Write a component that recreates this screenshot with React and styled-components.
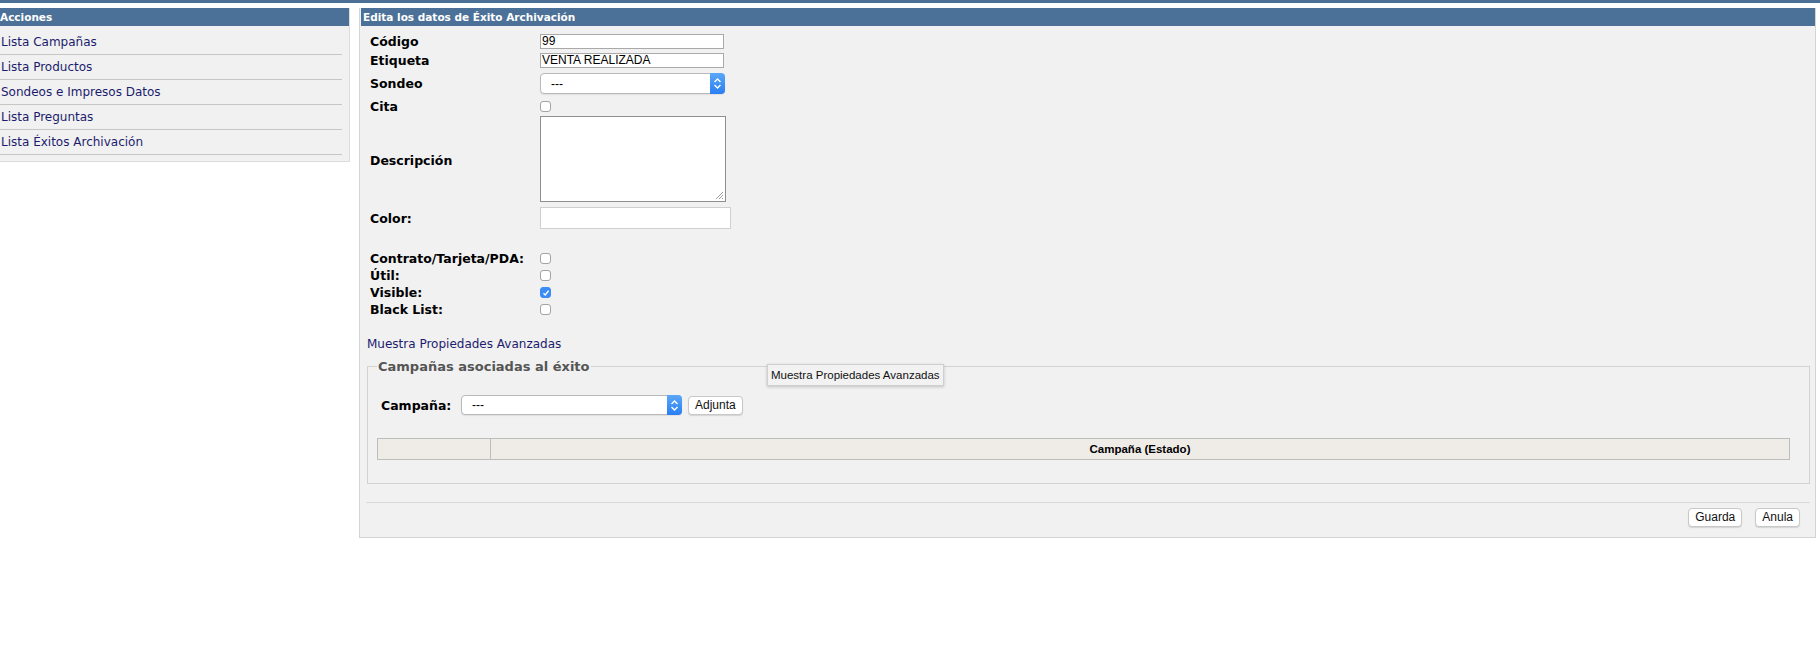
import React from "react";
import styled, { createGlobalStyle } from "styled-components";

const GlobalStyle = createGlobalStyle`
    body {
        margin: 0;
        background: #fff;
        font-family: "DejaVu Sans", Verdana, sans-serif;
    }
`;

const TopStrip = styled.div`
    height: 3px;
    background: #4b6f95;
`;

const Layout = styled.div`
    display: flex;
    align-items: flex-start;
    gap: 9px;
    padding-top: 5px;
    padding-right: 4px;
`;

const Sidebar = styled.aside`
    width: 350px;
    flex: none;
    background: #f1f1f1;
    border-right: 1px solid #dcdcdc;
    border-bottom: 1px solid #dcdcdc;
    box-sizing: border-box;
`;

const PanelHeader = styled.div`
    height: 18px;
    line-height: 18px;
    background: #4c7198;
    color: #fff;
    font-size: 10.5px;
    font-weight: bold;
    padding-left: ${(props) => props.indent || 0}px;
    white-space: nowrap;
`;

const NavList = styled.ul`
    list-style: none;
    margin: 0;
    padding: 4px 7px 6px 0;
`;

const NavItem = styled.li`
    height: 24px;
    line-height: 24px;
    border-bottom: 1px solid #c6c6c6;
    font-size: 12px;
    color: #1c1c6e;
    padding-left: 1px;
`;

const Main = styled.main`
    flex: 1;
    position: relative;
    background: #f1f1f1;
    border: 1px solid #d4d4d4;
    border-top: none;
    padding-left: 1px;
`;

const Form = styled.div`
    padding: 6px 0 0 9px;
`;

const FormRow = styled.div`
    display: grid;
    grid-template-columns: 170px 1fr;
    align-items: center;
    height: ${(props) => props.h}px;
`;

const Label = styled.span`
    font-size: 12.5px;
    font-weight: bold;
    color: #000;
`;

const TextInput = styled.div`
    width: ${(props) => props.w || 181}px;
    height: ${(props) => props.ht || 13}px;
    background: #fff;
    border: 1px solid ${(props) => props.light ? "#cfcfcf" : "#a9a9a9"};
    font-family: "Liberation Sans", Arial, sans-serif;
    font-size: 12px;
    line-height: 13px;
    padding-left: 1px;
    box-sizing: content-box;
`;

const TextArea = styled.div`
    position: relative;
    width: 184px;
    height: 84px;
    background: #fff;
    border: 1px solid #8f8f8f;
    align-self: start;
`;

const Grip = styled.svg`
    position: absolute;
    right: 1px;
    bottom: 1px;
`;

const SelectBox = styled.div`
    position: relative;
    width: ${(props) => props.w}px;
    height: ${(props) => props.ht}px;
    background: #fff;
    border: 1px solid #b9b9b9;
    border-radius: 4px;
    box-sizing: border-box;
    font-family: "Liberation Sans", Arial, sans-serif;
    font-size: 12px;
    display: flex;
    align-items: center;
    padding-left: 10px;
    box-shadow: 0 1px 1px rgba(0, 0, 0, 0.08);
`;

const SelectArrow = styled.div`
    position: absolute;
    right: -1px;
    top: -1px;
    bottom: -1px;
    width: 15px;
    border-radius: 0 4px 4px 0;
    background: linear-gradient(#5aa8f8, #2a7ef2);
    display: flex;
    align-items: center;
    justify-content: center;
`;

const Check = styled.span`
    display: inline-flex;
    align-items: center;
    justify-content: center;
    width: 11px;
    height: 11px;
    border-radius: 3px;
    box-sizing: border-box;
    border: 1px solid ${(props) => (props.checked ? "#3b8df5" : "#a3a3a3")};
    background: ${(props) => (props.checked ? "#3b8df5" : "#fff")};
    margin-top: ${(props) => props.mt || 0}px;
`;

const AdvLink = styled.div`
    margin: 18px 0 0 -3px;
    height: 16px;
    line-height: 16px;
    font-size: 12px;
    color: #1c1c6e;
`;

const Fieldset = styled.fieldset`
    margin: 7px 5px 0 6px;
    padding: 0 9px 23px 9px;
    border: 1px solid #d2d2d2;
`;

const Legend = styled.legend`
    padding: 0 1px;
    font-size: 13px;
    font-weight: bold;
    color: #555;
`;

const CampRow = styled.div`
    display: flex;
    align-items: center;
    margin: 21px 0 0 4px;
    height: 20px;
`;

const CampLabel = styled(Label)`
    width: 80px;
`;

const Button = styled.div`
    height: 19px;
    padding: 0 6px;
    box-sizing: border-box;
    background: #fff;
    border: 1px solid #c8c8c8;
    border-radius: 4px;
    box-shadow: 0 1px 1px rgba(0, 0, 0, 0.12);
    font-family: "Liberation Sans", Arial, sans-serif;
    font-size: 12px;
    line-height: 17px;
    color: #111;
    margin-left: ${(props) => props.ml || 0}px;
`;

const Table = styled.table`
    width: calc(100% - 10px);
    margin: 23px 0 0 0;
    border-collapse: collapse;
    background: #efece8;
`;

const Th = styled.th`
    height: 20px;
    border: 1px solid #bdbdbd;
    font-family: "Liberation Sans", Arial, sans-serif;
    font-size: 11.5px;
    font-weight: bold;
    padding: 0;
    width: ${(props) => props.width || "auto"};
`;

const Divider = styled.div`
    margin: 18px 5px 0 5px;
    border-top: 1px solid #d8d8d8;
`;

const Actions = styled.div`
    display: flex;
    justify-content: flex-end;
    padding: 5px 15px 10px 0;
`;

const Tooltip = styled.div`
    position: absolute;
    left: 407px;
    top: 356px;
    height: 20px;
    line-height: 20px;
    padding: 0 3px;
    background: #f2f2f2;
    border: 1px solid #cfcfcf;
    box-shadow: 0 1px 3px rgba(0, 0, 0, 0.2);
    font-family: "Liberation Sans", Arial, sans-serif;
    font-size: 11.5px;
    color: #111;
    white-space: nowrap;
`;

const Arrows = () => (
    <svg width="9" height="13" viewBox="0 0 9 13">
        <path d="M1.5 5 L4.5 2 L7.5 5 M1.5 8 L4.5 11 L7.5 8" fill="none" stroke="#fff" strokeWidth="1.4" />
    </svg>
);

const Select = ({ w, ht }) => (
    <SelectBox w={w} ht={ht}>
        ---
        <SelectArrow>
            <Arrows />
        </SelectArrow>
    </SelectBox>
);

const Checkbox = ({ checked, mt }) => (
    <Check checked={checked} mt={mt}>
        {checked && (
            <svg width="8" height="8" viewBox="0 0 8 8">
                <path d="M1.5 4.2 L3.2 6 L6.6 1.8" fill="none" stroke="#fff" strokeWidth="1.4" />
            </svg>
        )}
    </Check>
);

const menu = [
    "Lista Campañas",
    "Lista Productos",
    "Sondeos e Impresos Datos",
    "Lista Preguntas",
    "Lista Éxitos Archivación",
];

const flags = [
    { label: "Contrato/Tarjeta/PDA:", checked: false },
    { label: "Útil:", checked: false },
    { label: "Visible:", checked: true },
    { label: "Black List:", checked: false },
];

const App = () => {
    return (
        <>
            <GlobalStyle />
            <TopStrip />
            <Layout>
                <Sidebar>
                    <PanelHeader>Acciones</PanelHeader>
                    <NavList>
                        {menu.map((item) => (
                            <NavItem key={item}>{item}</NavItem>
                        ))}
                    </NavList>
                </Sidebar>

                <Main>
                    <PanelHeader indent={2}>Edita los datos de Éxito Archivación</PanelHeader>
                    <Form>
                        <FormRow h={18}>
                            <Label>Código</Label>
                            <TextInput>99</TextInput>
                        </FormRow>
                        <FormRow h={21}>
                            <Label>Etiqueta</Label>
                            <TextInput>VENTA REALIZADA</TextInput>
                        </FormRow>
                        <FormRow h={25}>
                            <Label>Sondeo</Label>
                            <Select w={185} ht={21} />
                        </FormRow>
                        <FormRow h={20}>
                            <Label>Cita</Label>
                            <Checkbox mt={1} />
                        </FormRow>
                        <FormRow h={88}>
                            <Label>Descripción</Label>
                            <TextArea>
                                <Grip width="9" height="9" viewBox="0 0 9 9">
                                    <path d="M8 1 L1 8 M8 4 L4 8 M8 7 L7 8" stroke="#9a9a9a" strokeWidth="1" />
                                </Grip>
                            </TextArea>
                        </FormRow>
                        <FormRow h={28}>
                            <Label>Color:</Label>
                            <TextInput w={188} ht={20} light />
                        </FormRow>
                        <FormRow h={18} />
                        {flags.map((f) => (
                            <FormRow h={17} key={f.label}>
                                <Label>{f.label}</Label>
                                <Checkbox checked={f.checked} />
                            </FormRow>
                        ))}
                        <AdvLink>Muestra Propiedades Avanzadas</AdvLink>
                    </Form>

                    <Fieldset>
                        <Legend>Campañas asociadas al éxito</Legend>
                        <CampRow>
                            <CampLabel>Campaña:</CampLabel>
                            <Select w={221} ht={20} />
                            <Button ml={6}>Adjunta</Button>
                        </CampRow>
                        <Table>
                            <thead>
                                <tr>
                                    <Th width="112px"></Th>
                                    <Th>Campaña (Estado)</Th>
                                </tr>
                            </thead>
                        </Table>
                    </Fieldset>

                    <Divider />
                    <Actions>
                        <Button>Guarda</Button>
                        <Button ml={13}>Anula</Button>
                    </Actions>

                    <Tooltip>Muestra Propiedades Avanzadas</Tooltip>
                </Main>
            </Layout>
        </>
    );
};

export default App;
